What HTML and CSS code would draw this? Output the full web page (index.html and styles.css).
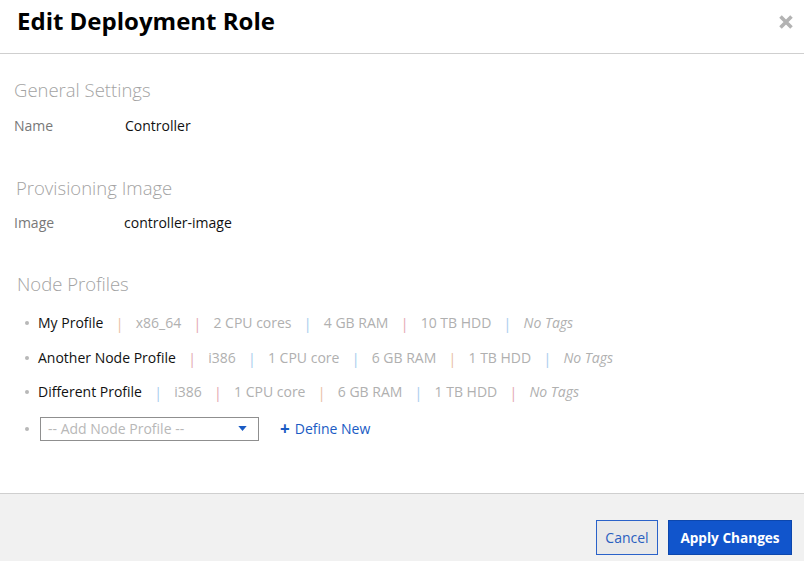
FILE: index.html
```html
<!DOCTYPE html>
<html>
<head>
<meta charset="utf-8">
<link rel="stylesheet" href="styles.css">
</head>
<body>
<div class="modal">
  <header class="modal-header">
    <h1 class="title">Edit Deployment Role</h1>
    <span class="close" aria-label="close">
      <svg width="16" height="16" viewBox="0 0 16 16"><path d="M2.5 2.5 L13.5 13.5 M13.5 2.5 L2.5 13.5" stroke="#b3b3b3" stroke-width="3.6" stroke-linecap="butt"/></svg>
    </span>
  </header>
  <main class="modal-body">
    <section class="section sec-general">
      <h2 class="sec-title">General Settings</h2>
      <div class="field"><span class="label">Name</span><span class="value">Controller</span></div>
    </section>
    <section class="section sec-image">
      <h2 class="sec-title indent">Provisioning Image</h2>
      <div class="field"><span class="label">Image</span><span class="value v2">controller-image</span></div>
    </section>
    <section class="section sec-nodes">
      <h2 class="sec-title indent2">Node Profiles</h2>
      <ul class="profiles">
        <li><span class="pname">My Profile</span><span class="sep o">|</span><span class="attr">x86_64</span><span class="sep p">|</span><span class="attr">2 CPU cores</span><span class="sep b">|</span><span class="attr">4 GB RAM</span><span class="sep p">|</span><span class="attr">10 TB HDD</span><span class="sep b">|</span><span class="attr tags">No Tags</span></li>
        <li><span class="pname">Another Node Profile</span><span class="sep p">|</span><span class="attr">i386</span><span class="sep b">|</span><span class="attr">1 CPU core</span><span class="sep b">|</span><span class="attr">6 GB RAM</span><span class="sep o">|</span><span class="attr">1 TB HDD</span><span class="sep b">|</span><span class="attr tags">No Tags</span></li>
        <li><span class="pname">Different Profile</span><span class="sep b">|</span><span class="attr">i386</span><span class="sep p">|</span><span class="attr">1 CPU core</span><span class="sep o">|</span><span class="attr">6 GB RAM</span><span class="sep b">|</span><span class="attr">1 TB HDD</span><span class="sep p">|</span><span class="attr tags">No Tags</span></li>
        <li class="add-row">
          <div class="select"><span>-- Add Node Profile --</span>
            <svg width="9" height="5" viewBox="0 0 10 6"><path d="M0 0 H10 L5 6 Z" fill="#1a5bc4"/></svg>
          </div>
          <a class="define"><span class="plus">+</span>Define New</a>
        </li>
      </ul>
    </section>
  </main>
  <footer class="modal-footer">
    <button class="btn cancel">Cancel</button>
    <button class="btn apply">Apply Changes</button>
  </footer>
</div>
</body>
</html>
```

FILE: styles.css
```css
* { box-sizing: border-box; }
html, body { margin: 0; padding: 0; }
body {
  width: 804px;
  height: 561px;
  font-family: "Open Sans", "Noto Sans", sans-serif;
  background: #fff;
  overflow: hidden;
}
.modal { width: 804px; height: 561px; display: flex; flex-direction: column; }
.modal-header {
  height: 54px;
  border-bottom: 1px solid #cfcfcf;
  display: flex;
  align-items: flex-start;
  justify-content: space-between;
  padding: 0 10px 0 17px;
}
.title {
  margin: 0;
  font-size: 24px;
  font-weight: 700;
  color: #000;
  line-height: 32px;
  padding-top: 5px;
}
.close { padding-top: 14px; display: block; }
.close svg { display: block; }
.modal-body { flex: 1; padding: 0 0 0 14px; }
.sec-title {
  margin: 0;
  font-size: 18.5px;
  font-weight: 300;
  color: #a3a3a3;
  line-height: 26px;
}
.indent { padding-left: 2px; }
.indent2 { padding-left: 3px; }
.sec-general { padding-top: 23px; }
.sec-image { padding-top: 39px; }
.sec-nodes { padding-top: 38px; }
.field { display: flex; font-size: 14px; line-height: 20px; margin-top: 13px; }
.sec-image .field { margin-top: 12px; }
.label { width: 111px; color: #787878; }
.value { color: #111; }
.v2 { margin-left: -1px; }
.profiles { list-style: none; margin: 16px 0 0; padding: 0 0 0 10px; }
.profiles li {
  display: flex;
  align-items: center;
  font-size: 14px;
  line-height: 20px;
  height: 20px;
  margin-bottom: 14.5px;
  position: relative;
  padding-left: 14px;
}
.profiles li::before {
  content: "";
  position: absolute;
  left: 1px;
  top: 8px;
  width: 4px;
  height: 4px;
  border-radius: 50%;
  background: #b8b8b8;
}
.pname { color: #111; }
.attr { color: #b0b0b0; }
.tags { font-style: italic; }
.sep { margin: 0 12px; font-size: 15px; }
.sep.o { color: #e9bfa6; }
.sep.p { color: #e4aab4; }
.sep.b { color: #aacdee; }
.profiles li.add-row { height: 24px; margin-top: 1px; padding-left: 16px; }
.profiles li.add-row::before { top: 10px; }
.select {
  width: 219px;
  height: 24px;
  border: 1px solid #8f8f8f;
  display: flex;
  align-items: center;
  justify-content: space-between;
  padding: 0 11px 0 7px;
  color: #b8b8b8;
  font-size: 14px;
}
.select svg { display: block; }
.define {
  margin-left: 21px;
  color: #1a5bc4;
  font-size: 14px;
  display: flex;
  align-items: center;
}
.plus { font-weight: 700; font-size: 17px; margin-right: 5px; line-height: 20px; }
.modal-footer {
  height: 68px;
  border-top: 1px solid #cfcfcf;
  background: #f1f1f1;
  display: flex;
  justify-content: flex-end;
  align-items: flex-start;
  padding: 26px 12px 0 0;
}
.btn {
  font-family: "Open Sans", "Noto Sans", sans-serif;
  font-size: 14px;
  height: 35px;
  cursor: pointer;
}
.cancel {
  width: 62px;
  background: #e9e9e9;
  border: 1px solid #2a62c9;
  color: #2a5fc0;
  margin-right: 10px;
  padding: 0;
}
.apply {
  width: 124px;
  background: #1155cc;
  border: 1px solid #0d47ad;
  color: #fff;
  font-weight: 700;
  font-size: 13.6px;
  padding: 0;
}
```
